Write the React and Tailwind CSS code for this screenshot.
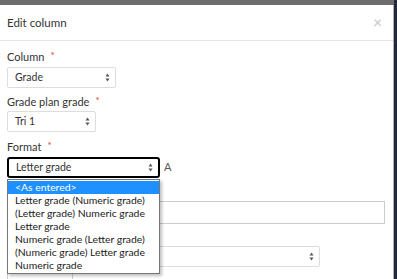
const formats = [
  "<As entered>",
  "Letter grade (Numeric grade)",
  "(Letter grade) Numeric grade",
  "Letter grade",
  "Numeric grade (Letter grade)",
  "(Numeric grade) Letter grade",
  "Numeric grade",
];

const Arrows = () => (
  <svg width="5" height="9" viewBox="0 0 5 9" className="shrink-0">
    <path d="M2.5 0.5 L4.5 3.5 L0.5 3.5 Z" fill="#555" />
    <path d="M2.5 8.5 L4.5 5.5 L0.5 5.5 Z" fill="#555" />
  </svg>
);

const Label = ({ children }) => (
  <div className="h-[16px] flex items-center text-[11px] text-[#333]">
    {children}
    <span className="text-[#e33] text-[10px] ml-[6px] -mt-[4px]">*</span>
  </div>
);

const Select = ({ value, w, focus }) => (
  <div
    className={`${w} h-[21px] flex items-center justify-between pl-[7px] pr-[5px] bg-white text-[10.5px] text-[#333] ${
      focus ? "border-2 border-black rounded-[3px]" : "border border-[#ddd] rounded-[2px]"
    }`}
  >
    <span>{value}</span>
    <Arrows />
  </div>
);

const App = () => {
  return (
    <div
      className="w-[397px] h-[279px] bg-[#6e6e6e] flex overflow-hidden"
      style={{ fontFamily: "Lato, 'Liberation Sans', sans-serif" }}
    >
      <div className="mt-[5px] w-[394px] bg-white border-r border-[#b0b0b0] flex flex-col">
        <div className="h-[36px] shrink-0 px-[7px] flex items-center justify-between border-b border-[#e5e5e5]">
          <span className="text-[11.5px] text-[#333] mt-[1px]">Edit column</span>
          <span className="text-[15px] font-bold text-[#cfcfcf] mr-[4px] leading-none">×</span>
        </div>
        <div className="px-[7px] pt-[8px] flex flex-col">
          <Label>Column</Label>
          <div className="mt-[2px]">
            <Select value="Grade" w="w-[109px]" />
          </div>
          <div className="mt-[6px]">
            <Label>Grade plan grade</Label>
          </div>
          <div className="mt-[1px]">
            <Select value="Tri 1" w="w-[89px]" />
          </div>
          <div className="mt-[7px]">
            <Label>Format</Label>
          </div>
          <div className="mt-[2px] relative flex items-center">
            <Select value="Letter grade" w="w-[153px]" focus />
            <span className="ml-[4px] text-[11px] text-[#555]">A</span>
            <div className="absolute left-0 top-[22px] w-[153px] bg-white border border-[#777] shadow-[2px_2px_3px_rgba(0,0,0,0.25)] z-10 py-px">
              {formats.map((f, i) => (
                <div
                  key={f}
                  className={`h-[13px] leading-[13px] pl-[7px] text-[10.4px] ${
                    i === 0 ? "bg-[#1e90ff] text-white" : "text-[#1a1a1a]"
                  }`}
                >
                  {f}
                </div>
              ))}
            </div>
          </div>
          <div className="mt-[7px] h-[16px]" />
          <div className="h-[23px] w-[378px] border border-[#ccc]" />
          <div className="mt-[6px] h-[16px]" />
          <div className="w-[313px] h-[21px] border border-[#ddd] rounded-[2px] flex items-center justify-end pr-[5px]">
            <Arrows />
          </div>
          <div className="mt-[5px] w-[66px] h-[10px] border border-[#ccc]" />
        </div>
      </div>
      <div className="flex-1 bg-[#23293a]" />
    </div>
  );
};

export default App;
